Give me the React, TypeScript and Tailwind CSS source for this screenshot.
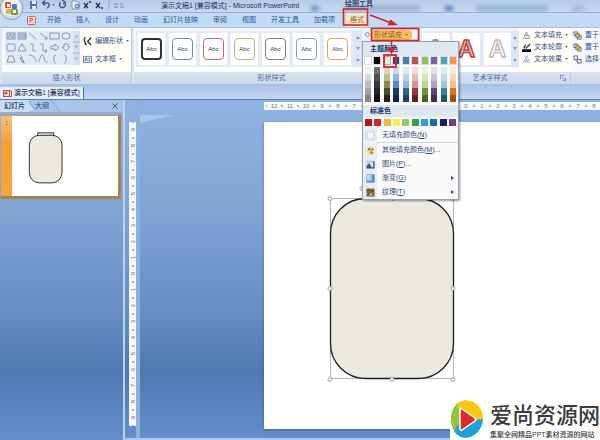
import type { ReactNode } from "react";
import clsx from "clsx";

const TABS = ["开始", "插入", "设计", "动画", "幻灯片放映", "审阅", "视图", "开发工具", "加载项"];

const STYLE_BORDERS = [
  "border-2 border-[#2e3338]",
  "border border-[#6f8f99]",
  "border border-[#c9676b]",
  "border border-[#b5b878]",
  "border border-[#807690]",
  "border border-[#74aab8]",
  "border border-[#e0a65c]",
];

// base colour first, then five tints from light to dark
const THEME_COLUMNS = [
  ["bg-white", "bg-[#f0f0f0]", "bg-[#d8d8d8]", "bg-[#bdbdbd]", "bg-[#a3a3a3]", "bg-[#868686]"],
  ["bg-black", "bg-[#6d6d6d]", "bg-[#505050]", "bg-[#383838]", "bg-[#242424]", "bg-[#111111]"],
  ["bg-[#eeecda]", "bg-[#dcd8bd]", "bg-[#c3ba8c]", "bg-[#918a4d]", "bg-[#4b4a22]", "bg-[#24240f]"],
  ["bg-[#28497c]", "bg-[#c6d9f0]", "bg-[#8fb4e2]", "bg-[#5588cc]", "bg-[#1c3a66]", "bg-[#10233f]"],
  ["bg-[#4a7fae]", "bg-[#dbe8f3]", "bg-[#b7d0e6]", "bg-[#90b6d8]", "bg-[#2f6690]", "bg-[#1d4263]"],
  ["bg-[#bb5054]", "bg-[#f3dcdd]", "bg-[#e6b8ba]", "bg-[#da9092]", "bg-[#943538]", "bg-[#642022]"],
  ["bg-[#98bb5b]", "bg-[#eaf2dc]", "bg-[#d5e5b8]", "bg-[#bdd790]", "bg-[#769238]", "bg-[#4c6322]"],
  ["bg-[#7b62a0]", "bg-[#e5dfec]", "bg-[#cbc0da]", "bg-[#b09fc8]", "bg-[#5e4680]", "bg-[#3c2b58]"],
  ["bg-[#4ba5bd]", "bg-[#daeef3]", "bg-[#b7dde8]", "bg-[#90ccdb]", "bg-[#32849a]", "bg-[#1f5868]"],
  ["bg-[#ee9747]", "bg-[#fdeada]", "bg-[#fad5b4]", "bg-[#f7be8c]", "bg-[#df7413]", "bg-[#9b5210]"],
];

const STANDARD = [
  "bg-[#b3131b]",
  "bg-[#da242c]",
  "bg-[#edb942]",
  "bg-[#f5f14a]",
  "bg-[#98cb58]",
  "bg-[#2da44e]",
  "bg-[#2ba3cc]",
  "bg-[#2068ac]",
  "bg-[#0b2357]",
  "bg-[#6b3f91]",
];

const PICKED = 2;

function Caret() {
  return (
    <svg viewBox="0 0 4 3" className="h-[2px] w-[3px] shrink-0">
      <path d="M0 0h4L2 3z" fill="#4a6391" />
    </svg>
  );
}

function Group({ label, className, launcher, children }: { label: string; className?: string; launcher?: boolean; children: ReactNode }) {
  return (
    <section className={clsx("flex shrink-0 flex-col border-r border-[#b9cbe2] bg-linear-to-b from-[#f1f5fb] to-white", className)}>
      <div className="flex h-11 items-start">{children}</div>
      <div className="flex h-3 items-center bg-linear-to-b from-[#d9e2f0] to-[#cbd9ec] text-[#456aa3]">
        <span className="flex-1 text-center whitespace-nowrap">{label}</span>
        {launcher && (
          <svg viewBox="0 0 6 6" className="mr-1 size-[6px]" fill="none" stroke="#6780aa">
            <path d="M.5 4V.5H4M2 2l3 3M5.5 3v2.5H3" strokeWidth=".8" />
          </svg>
        )}
      </div>
    </section>
  );
}

function Scroller() {
  return (
    <div className="flex h-9 w-2 shrink-0 flex-col justify-around bg-[#dce6f4] py-px">
      {["上", "下", "更多"].map((name, i) => (
        <button key={name} aria-label={name} className="flex justify-center">
          <svg viewBox="0 0 4 3" className="h-[3px] w-1">
            <path d={i === 0 ? "M0 3h4L2 0z" : "M0 0h4L2 3z"} fill="#8299bf" />
          </svg>
        </button>
      ))}
    </div>
  );
}

function ShapeGallery() {
  return (
    <svg viewBox="0 0 75 34" className="h-[34px] w-[75px] shrink-0" fill="none" stroke="#6f86ac" strokeWidth=".8">
      <rect width="75" height="34" fill="#e2eaf5" stroke="none" />
      <rect x="2" y="2" width="8" height="6" fill="#cdd9e6" />
      <path d="M3 7l2-4 2 4M7 4h2M7 6h2" />
      <rect x="13" y="2" width="8" height="6" fill="#cdd9e6" />
      <path d="M14 4h3M14 6h3M18 3v4M20 3v4" />
      <path d="M24 2l7 6M35 2l7 6M39.500 8H42V5.500" />
      <rect x="45" y="2" width="9" height="6" />
      <rect x="57" y="2" width="8" height="6" rx="3" />
      <rect x="2" y="13" width="8" height="7" rx="1" />
      <path d="M17 12.500l4 7.500h-8zM25 13h3v7h3M35 13h3v7h4M40 18l2 2-2 2" />
      <path d="M46 15h4v-2l4 3.500-4 3.500v-2h-4zM59 13h4v3h2l-4 4-4-4h2z" />
      <path d="M4 25h4l1 3 1 3H2l1-3zM15 24l3 3h-3l4 3-2 1 3 1M15 27l2 4" />
      <path d="M24 24c4 0 7 3 7 7M34 31c2-9 4-9 5-4s2 4 4 4" />
      <path d="M51 24c-3 0-1 4-3 4 2 0 0 4 3 4M59 24c3 0 1 4 3 4-2 0 0 4-3 4" />
      <rect x="68" width="7" height="34" fill="#d5e1f1" stroke="none" />
      <path d="M70 6l1.500-2L73 6zM70 15l1.500 2 1.500-2zM70 27l1.500 2 1.500-2zM68 11h7M68 22h7" stroke="#8ea5c8" />
    </svg>
  );
}

function Letter({ className }: { className: string }) {
  return (
    <svg viewBox="0 0 27 32" className="h-8 w-[27px] shrink-0 bg-white">
      <text x="13.500" y="24" textAnchor="middle" fontSize="24" fontWeight="700" strokeWidth="1.500" className={className}>
        A
      </text>
    </svg>
  );
}

function Command({ icon, label, caret = true }: { icon: ReactNode; label: string; caret?: boolean }) {
  return (
    <button className="flex items-center gap-[3px] whitespace-nowrap text-[#2f4f86]">
      <svg viewBox="0 0 10 10" className="size-[9px] shrink-0" fill="none">
        {icon}
      </svg>
      <span>{label}</span>
      {caret && <Caret />}
    </button>
  );
}

function MenuItem({ icon, children, more }: { icon: ReactNode; children: ReactNode; more?: boolean }) {
  return (
    <button role="menuitem" className="flex h-[14px] w-full items-center text-left whitespace-nowrap text-[#304a80]">
      <span className="flex h-full w-[14px] items-center justify-center bg-[#e6edf6]">
        <svg viewBox="0 0 10 10" className="size-[9px]">
          {icon}
        </svg>
      </span>
      <span className="ml-[5px] flex-1">{children}</span>
      {more && (
        <svg viewBox="0 0 3 4" className="mr-1 h-1 w-[3px]">
          <path d="M0 0v4l3-2z" fill="#304a80" />
        </svg>
      )}
    </button>
  );
}

function FillMenu() {
  return (
    <div role="menu" className="absolute top-full left-0 z-10 w-[97px] border border-[#93a0b5] bg-[#fafafa] shadow-[1px_1px_2px_#0006]">
      <h3 className="h-[14px] bg-[#dfe7f1] pl-[7px] leading-[14px] font-bold text-[#15336b]">主题颜色</h3>
      <div className="flex justify-between px-[2px] pt-px pb-[3px]">
        {THEME_COLUMNS.map((column, c) => (
          <div key={column[0]} className="flex w-[6px] flex-col">
            {column.map((tint, i) => (
              <button
                key={tint}
                aria-label="颜色"
                className={clsx("h-[7px]", i === 0 && "mb-[3px] outline", i === 0 && (c === PICKED ? "outline-[#f0a04a]" : "outline-[#d5d8de]"), tint)}
              />
            ))}
          </div>
        ))}
      </div>
      <h3 className="h-3 bg-[#dfe7f1] pl-[7px] leading-3 font-bold text-[#15336b]">标准色</h3>
      <div className="flex justify-between px-[2px] py-[2px]">
        {STANDARD.map((color) => (
          <button key={color} aria-label="颜色" className={clsx("size-[7px]", color)} />
        ))}
      </div>
      <MenuItem icon={<rect x="1" y="1" width="8" height="8" fill="#f6f6f2" stroke="#b8bfc8" strokeWidth=".8" />}>
        无填充颜色(<u>N</u>)
      </MenuItem>
      <hr className="ml-[14px] border-[#cbd3de]" />
      <MenuItem
        icon={
          <>
            <circle cx="5" cy="5" r="4.500" fill="#f1dc81" />
            <circle cx="3.500" cy="3.500" r="1.200" fill="#b44432" />
            <circle cx="7" cy="4" r="1.200" fill="#3a6f9f" />
            <path d="M5 5l3 3-3 .5z" fill="#6a6439" />
          </>
        }
      >
        其他填充颜色(<u>M</u>)...
      </MenuItem>
      <MenuItem
        icon={
          <>
            <rect x=".5" y=".5" width="9" height="9" fill="#b8d1eb" />
            <path d="M.5 9.500V7l3-3 2 3 3-6 1 1v7.500z" fill="#3b5373" />
            <path d="M6 3h2v5H6z" fill="#edf3f9" />
          </>
        }
      >
        图片(<u>P</u>)...
      </MenuItem>
      <MenuItem
        more
        icon={
          <>
            <rect x=".5" y=".5" width="9" height="9" fill="#4d80b8" />
            <path d="M1 1h6v7H1z" fill="#9ec2e6" />
            <path d="M1 1h3v5H1z" fill="#c9def2" />
          </>
        }
      >
        渐变(<u>G</u>)
      </MenuItem>
      <MenuItem
        more
        icon={
          <>
            <rect x=".5" y=".5" width="9" height="9" fill="#8a7640" />
            <path d="M1 3l3-1 2 2 3-1M2 8l2-3 3 3 2-2" stroke="#2f2a1a" fill="none" />
            <path d="M4 6h3v2H4z" fill="#e2c877" />
          </>
        }
      >
        纹理(<u>T</u>)
      </MenuItem>
    </div>
  );
}

function TitleBar() {
  return (
    <header className="relative flex h-[13px] items-center overflow-hidden border-b border-[#94b0d4] bg-linear-to-b from-[#b5cce6] to-[#c6d9ef] pl-[29px]">
      <svg viewBox="0 0 100 12" className="h-3 w-[100px] shrink-0" fill="none" stroke="#36579b">
        <path d="M1 1h7v8H1z" fill="#5a73b5" stroke="none" />
        <path d="M3 1h4v3H3zM3 6h4v3H3z" fill="#e7edf8" stroke="none" />
        <path d="M14 3h4c3 0 3 4 0 5M16 .5L13.500 3 16 5.500" strokeWidth="1.400" />
        <path d="M23 4h3l-1.500 2z" fill="#5874a4" stroke="none" />
        <path d="M36 3a3 3 0 1 1-4-1M33 0l3 2-2 2" strokeWidth="1.400" />
        <path d="M43 1h5l2 2v6h-7z" fill="#f2f5fa" stroke="#6c7d9a" strokeWidth=".8" />
        <circle cx="48" cy="6" r="2" fill="#b4cbe4" strokeWidth=".8" />
        <path d="M55 3l4 5M59 3l-4 5M60 2h2" stroke="#1c3155" strokeWidth="1.300" />
        <path d="M67 3l4 5M71 3l-4 5M72 8h2" stroke="#1c3155" strokeWidth="1.300" />
        <path d="M80 1v8" stroke="#879fc5" />
        <path d="M85 4h4M91 4h3M85 6l2 2 2-2M91 7h4" stroke="#526f9f" strokeWidth=".8" />
      </svg>
      <h1 className="ml-8 shrink-0 whitespace-nowrap text-[#20365c]">演示文稿1 [兼容模式] - Microsoft PowerPoint</h1>
      <div className="flex flex-1 items-center justify-between pt-1 pr-4 pl-3 blur-[2px]">
        <span className="h-[5px] w-2 bg-[#6288bc]" />
        <span className="h-[5px] w-[76px] bg-[#95add0]" />
        <span className="h-[5px] w-2 bg-[#4d77bb]" />
        <span className="h-[5px] w-[70px] bg-[#8eaad0]" />
        <span className="h-[5px] w-3 bg-[#9fb6d6]" />
      </div>
      <span className="absolute top-0 left-[345px] text-[7px] leading-[7px] font-medium text-[#20304a]">绘图工具</span>
    </header>
  );
}

function OfficeButton() {
  return (
    <button aria-label="Office" className="absolute top-0 left-0 z-10">
      <svg viewBox="0 0 25 20" className="h-5 w-[25px]">
        <ellipse cx="11.500" cy="8" rx="11.500" ry="11.500" fill="#d4dde8" stroke="#8b9fb9" />
        <ellipse cx="11.500" cy="7" rx="9" ry="9" fill="#f4f5f6" />
        <rect x="5" y="2" width="6" height="6" rx="1" fill="#d9542c" />
        <rect x="7" y="4" width="3" height="3" fill="#fff" />
        <rect x="12" y="4" width="5" height="5" rx="1" fill="#4d7cc0" />
        <rect x="6" y="9" width="5" height="5" rx="1" fill="#e8b32d" />
        <rect x="11" y="9" width="7" height="6" rx="1" fill="#74a23d" />
        <rect x="13" y="10" width="3" height="3" fill="#fff" />
      </svg>
    </button>
  );
}

function Ribbon() {
  return (
    <div className="flex h-[58px] border-y border-[#a5bfe0] bg-[#dce7f5] pl-[2px]">
      <Group label="插入形状" className="w-[130px]">
        <div className="pt-[3px] pl-[3px]">
          <ShapeGallery />
        </div>
        <div className="flex h-full flex-1 flex-col justify-center gap-2 bg-[#fffdf6] pl-[3px]">
          <Command label="编辑形状" icon={<path d="M1 2l2 6M5 5l4-4M5 5l4 4M1 1h2M2 8h2M8 1h1M8 9h1" stroke="#26344e" strokeWidth="1.500" />} />
          <Command
            label="文本框"
            icon={
              <>
                <rect x=".5" y="1.500" width="9" height="7" fill="#dfe5ee" stroke="#77859c" />
                <path d="M2 7l1.500-4L5 7M6 4h2M6 6h2" stroke="#5c6f90" />
              </>
            }
          />
        </div>
      </Group>

      <Group label="形状样式" className="ml-[2px] w-[286px]" launcher>
        <div className="mt-[3px] ml-[2px] flex h-9 w-[218px] items-center gap-1 bg-[#e4ebf5] pl-[2px]">
          {STYLE_BORDERS.map((border) => (
            <button key={border} className="flex h-8 w-[27px] shrink-0 items-center justify-center bg-white">
              <span className={clsx("flex h-[22px] w-[21px] items-center justify-center rounded text-[6px] text-[#33393f]", border)}>Abc</span>
            </button>
          ))}
        </div>
        <div className="pt-[3px]">
          <Scroller />
        </div>
        <div className="relative flex h-[13px] w-[50px] shrink-0 items-center pl-[2px]">
          <svg viewBox="0 0 8 8" className="size-[7px]" fill="none" stroke="#60759b">
            <path d="M1 4l3-3 3 3-3 3z" fill="#e7eef7" />
          </svg>
          <button className="flex h-[10px] flex-1 items-center gap-[3px] rounded-sm bg-[#f9bd5c] pl-[3px] whitespace-nowrap text-[#7c5a2c]">
            形状填充
            <Caret />
          </button>
          <FillMenu />
        </div>
      </Group>

      <Group label="艺术字样式" className="w-[151px]" launcher>
        <div className="mt-[3px] flex h-9 items-center gap-1 bg-[#e4ebf5] pl-[2px]">
          <Letter className="fill-[#dde3ea] stroke-[#8490a4]" />
          <Letter className="fill-[#efb9ae] stroke-[#b9473d]" />
          <Letter className="fill-white stroke-[#c9b7bb]" />
        </div>
        <div className="pt-[3px]">
          <Scroller />
        </div>
        <div className="flex h-full flex-col gap-[2px] bg-[#fffdf6] px-[3px] pt-[2px]">
          <Command label="文本填充" icon={<path d="M1 8h8M2 7l3-6 3 6M3 5h4" stroke="#7c8798" />} />
          <Command
            label="文本轮廓"
            icon={
              <>
                <path d="M2 6l2-4M4 6l5-5" stroke="#3d4656" strokeWidth="1.500" />
                <path d="M0 7h10v3H0z" fill="#000" />
              </>
            }
          />
          <Command label="文本效果" icon={<path d="M1 9l4-8 4 8M3 6h4M3.500 9L5 5l1.500 4" stroke="#8cabd0" />} />
        </div>
      </Group>

      <div className="flex flex-1 flex-col bg-[#f7f9fc]">
        <div className="flex h-11 flex-col gap-[2px] pt-[2px] pl-[2px]">
          {["置于", "置于", "选择"].map((label, i) => (
            <Command
              key={i}
              label={label}
              caret={false}
              icon={
                <>
                  <path d="M1 1h4v4H1zM5 5h4v4H5z" fill="#e8edf4" stroke="#5c6878" />
                  <path d={i === 2 ? "M3 6l3 3" : "M3 3h4v4H3z"} fill="#d8b951" stroke="#86773f" />
                </>
              }
            />
          ))}
        </div>
        <div className="h-3 bg-linear-to-b from-[#d9e2f0] to-[#cbd9ec]" />
      </div>
    </div>
  );
}

function ThumbnailPane() {
  return (
    <aside className="flex w-[125px] shrink-0 flex-col border-r-2 border-[#b9d3f5]">
      <div className="flex h-3 items-center bg-[#a8c4e8] text-[#26477f]">
        <button className="bg-[#c9dcf4] pr-1 pl-1 leading-3 font-medium text-[#16346b]">幻灯片</button>
        <svg viewBox="0 0 8 12" className="h-3 w-[6px]">
          <path d="M0 0l8 12H0z" fill="#c9dcf4" />
          <path d="M0 0l8 12" stroke="#6f93c6" />
        </svg>
        <button className="leading-3">大纲</button>
        <svg viewBox="0 0 12 12" className="h-3 w-3" fill="none" stroke="#7fa0ce">
          <path d="M2 0l9 12" />
        </svg>
        <button aria-label="关闭" className="mr-[5px] ml-auto">
          <svg viewBox="0 0 6 6" className="size-[6px]" stroke="#3e5f98">
            <path d="M.5 .5l5 5M5.500 .5l-5 5" />
          </svg>
        </button>
      </div>
      <div className="mt-[2px] mr-[2px] ml-px flex border-t-2 border-r-[3px] border-b-[3px] border-[#a9804f] border-t-[#a9a295] bg-linear-to-b from-[#f6bd78] via-[#f6a030] via-35% to-[#f3a53d]">
        <span className="w-[11px] pt-1 pl-1 text-[6px] leading-[6px] text-[#c67a1d]">1</span>
        <svg viewBox="0 0 107 81" className="flex-1 bg-white" stroke="#35322f">
          <rect x="26" y="17" width="16" height="4" fill="#eceadf" />
          <rect x="17.500" y="19.500" width="33" height="48" rx="10" fill="#eceadf" />
        </svg>
      </div>
    </aside>
  );
}

const H_MARKS = [12, 11, 10, 9, 8, 7, 6, 5, 4, 3, 2, 1, 0, 1, 2, 3, 4, 5, 6, 7, 8];
const V_MARKS = [9, 8, 7, 6, 5, 4, 3, 2, 1, 0, 1, 2, 3, 4, 5, 6, 7, 8, 9];

function Selection() {
  const handles = [
    [4, 14],
    [67, 14],
    [127, 14],
    [4, 104],
    [127, 104],
    [4, 195],
    [66, 195],
    [127, 195],
    [36, 4],
  ];
  return (
    <svg viewBox="0 0 131 199" className="absolute top-[62px] left-[62px] h-[199px] w-[131px]" fill="none">
      <path d="M4.500 14.500h123v180H4.500z" stroke="#b4b4bb" />
      <path d="M36.500 4v10" stroke="#555" />
      <rect x="4.500" y="14.500" width="123" height="180" rx="35" fill="#eceade" stroke="#1d1d1f" strokeWidth="1.300" />
      {handles.map(([x, y]) => (
        <circle key={`${x}-${y}`} cx={x} cy={y + 0.5} r="2" fill="#f3f5f7" stroke="#8d939c" strokeWidth=".8" />
      ))}
    </svg>
  );
}

function Editor() {
  return (
    <main className="flex min-w-0 flex-1 border-b-2 border-[#a9c9f2]">
      <div className="flex shrink-0 border-r-4 border-[#8fb0dd] pt-[22px] pl-[4px]">
        <div className="flex w-[7px] flex-col self-start bg-[#f6f9fc] text-[6px] text-[#5d6b80]">
          {V_MARKS.map((n, i) => (
            <span key={i} className="flex h-4 flex-col items-center justify-between leading-none">
              <i className="h-px w-[2px] bg-[#a9b5c6]" />
              <span className="[writing-mode:sideways-lr]">{n}</span>
              <i className="h-px w-[2px] bg-[#a9b5c6]" />
            </span>
          ))}
        </div>
      </div>
      <svg viewBox="0 0 34 8" className="mt-[15px] h-2 w-[34px] shrink-0">
        <path d="M0 0h34L0 8z" fill="#a9c5ec" />
      </svg>
      <div className="ml-[90px] flex min-w-0 flex-1 flex-col">
        <div className="mt-[2px] flex h-2 overflow-hidden bg-[#f6f9fc] pl-[2px] text-[6px] text-[#6c798e]">
          {H_MARKS.map((n, i) => (
            <span key={i} className="flex w-4 shrink-0 items-center justify-between leading-none">
              <i className="h-[2px] w-px bg-[#a9b5c6]" />
              {n}
              <i className="h-[2px] w-px bg-[#a9b5c6]" />
            </span>
          ))}
        </div>
        <div className="relative mt-3 mb-[9px] flex-1 bg-white shadow-[0_1px_2px_#1f3a6688]">
          <Selection />
        </div>
      </div>
    </main>
  );
}

// red callouts drawn on top of the window
function Callouts() {
  return (
    <svg viewBox="0 0 90 70" className="pointer-events-none absolute top-0 left-[340px] z-20 h-[70px] w-[90px]" fill="none" stroke="#d5232b">
      <rect x="3.500" y="9" width="24" height="16" strokeWidth="1.600" />
      <rect x="31.500" y="28.500" width="47" height="12" strokeWidth="1.600" />
      <rect x="44" y="55" width="12" height="12" strokeWidth="1.800" />
      <path d="M30 15l20 7.500M51.500 41v8" strokeWidth="1.500" />
      <path d="M58 25l-10.500.500 3-6zM51.500 54l-4-6h8z" fill="#d5232b" stroke="none" />
    </svg>
  );
}

function SiteBadge() {
  return (
    <a href="#" className="absolute right-0 bottom-0 z-20 flex w-[150px] items-end gap-[6px] bg-white whitespace-nowrap">
      <svg viewBox="0 0 34 41" className="h-[41px] w-[34px] shrink-0">
        <path d="M16 1C2 2-3 20 4 32l10-9V9z" fill="#8fc63b" />
        <path d="M8 5c9-8 23-2 25 12 0 4 0 6-2 8L14 11 7 9z" fill="#fbc712" />
        <path d="M33 20c-1 17-20 26-29 12 3-5 6-9 9-10l10-1z" fill="#1fa0d8" />
        <path d="M10 10c0-1 1-1 2 0l13 9c1 1 1 2 0 3l-13 9c-1 1-2 0-2-1z" fill="#e1262d" stroke="#fff" strokeWidth="1.500" />
      </svg>
      <span className="flex flex-col text-[#3b3b3b]">
        <span className="text-[22px] leading-7 font-medium">爱尚资源网</span>
        <span className="text-[7px] leading-[10px] font-medium">集聚全网精品PPT素材资源的网站</span>
      </span>
    </a>
  );
}

export default function App() {
  return (
    <div className="relative flex min-h-screen flex-col overflow-hidden bg-[#bfd5f0] font-['Liberation_Sans','Noto_Sans_CJK_SC',sans-serif] text-[7px] leading-[10px]">
      <TitleBar />
      <OfficeButton />
      <nav className="flex h-[14px] items-center gap-[15px] bg-[#c3daf7] pl-[27px] whitespace-nowrap text-[#2f5597]">
        <svg viewBox="0 0 9 9" className="-mr-1 size-[9px]" fill="none" stroke="#d95a50">
          <rect x=".5" y=".5" width="8" height="8" rx="1" fill="#f6dedd" />
          <path d="M3 7V2.500h2.500v2H3M6 6l1 1" />
        </svg>
        {TABS.map((tab) => (
          <button key={tab}>{tab}</button>
        ))}
        <button className="-mx-1 rounded-t-sm bg-[#fbe6bd] px-1 leading-[14px] text-[#8a6d3c]">格式</button>
      </nav>
      <Ribbon />
      <div className="flex h-[15px] items-end border-b border-[#5b7fb3] bg-linear-to-b from-[#a9c3e6] to-[#c3d7f1]">
        <button className="flex h-3 items-center gap-[2px] border-r border-[#4c6da3] bg-[#e6effb] pr-[3px] pl-[3px] font-medium whitespace-nowrap text-[#1f3157]">
          <svg viewBox="0 0 9 9" className="size-[9px]" fill="none" stroke="#b2564c">
            <rect x=".5" y="1.500" width="6" height="6" fill="#f0d8d4" />
            <path d="M2 6V3h2v1.500H2M7 2h1.500v5.500H5" />
          </svg>
          演示文稿1 [兼容模式]
        </button>
      </div>
      <div className="flex flex-1 bg-[linear-gradient(#8fb2e2,#82a6d4_30%,#678dc3_62%,#5079b2_80%,#648fca)]">
        <ThumbnailPane />
        <Editor />
      </div>
      <Callouts />
      <SiteBadge />
    </div>
  );
}
